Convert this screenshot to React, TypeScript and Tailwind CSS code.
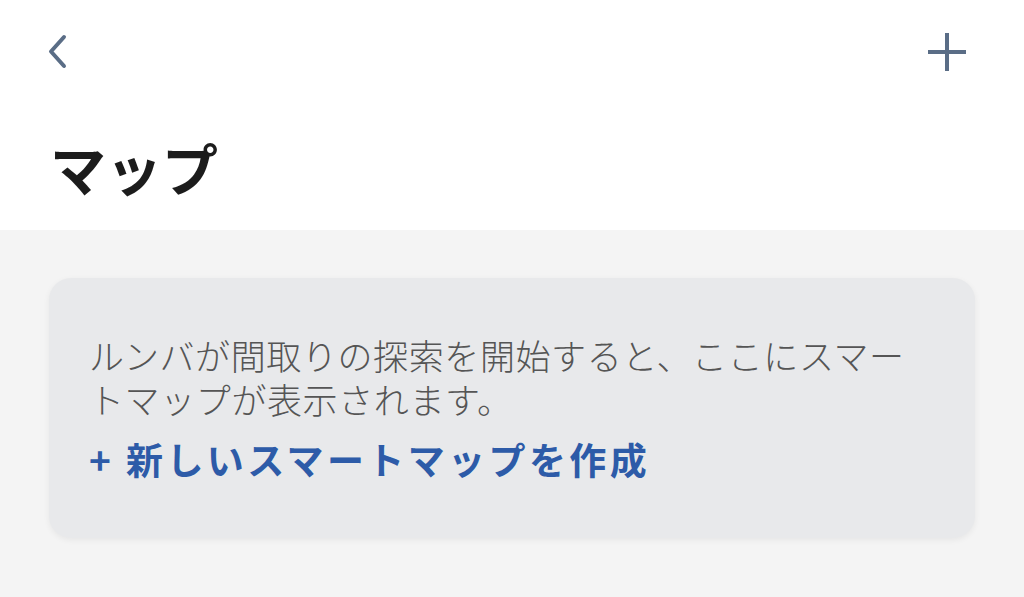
export default function App() {
  const jp = { fontFamily: '"Noto Sans CJK JP", "Noto Sans", sans-serif' };
  return (
    <div className="w-[1024px] h-[597px] flex flex-col bg-[#f4f4f4] overflow-hidden" style={jp}>
      <div className="bg-white h-[230px] flex flex-col">
        <div className="flex items-center justify-between pl-[44px] pr-[56px] pt-[24px] h-[80px]">
          <svg width="30" height="40" viewBox="0 0 30 40" fill="none">
            <path d="M20 5 L7 19.5 L20 34" stroke="#5a6d86" strokeWidth="4" strokeLinecap="round" strokeLinejoin="round" />
          </svg>
          <svg width="42" height="42" viewBox="0 0 42 42" fill="none">
            <path d="M21 2 V40 M2 21 H40" stroke="#5a6d86" strokeWidth="4" />
          </svg>
        </div>
        <h1 className="pl-[50px] pt-[59px] text-[56px] leading-[56px] font-bold text-[#1c1c1c]">マップ</h1>
      </div>
      <div className="px-[49px] pt-[48px]">
        <div className="bg-[#e8e9eb] rounded-[22px] shadow-[0_2px_6px_rgba(0,0,0,0.06)] pl-[40px] pr-[50px] pt-[55px] pb-[57px]">
          <p className="text-[35px] leading-[44px] tracking-[0.6px] text-[#555555] font-light">
            ルンバが間取りの探索を開始すると、ここにスマートマップが表示されます。
          </p>
          <p className="mt-[16px] text-[37px] leading-[44px] tracking-[3.4px] font-bold text-[#2d5ba8]">
            + 新しいスマートマップを作成
          </p>
        </div>
      </div>
    </div>
  );
}
